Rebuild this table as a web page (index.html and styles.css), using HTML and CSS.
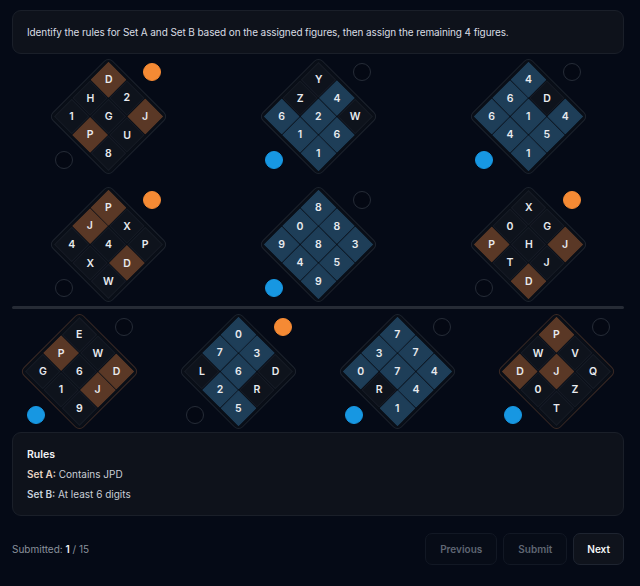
FILE: index.html
```html
<!DOCTYPE html>
<html lang="en">
<head>
<meta charset="utf-8">
<title>Set Rules</title>
<link rel="stylesheet" href="styles.css">
</head>
<body>
<div class="page">
  <div class="prompt">Identify the rules for Set A and Set B based on the assigned figures, then assign the remaining 4 figures.</div>

  <div class="grid grid-3">
    <div class="fig">
      <div class="diamond">
        <div class="cell a"><span>D</span></div><div class="cell"><span>2</span></div><div class="cell a"><span>J</span></div>
        <div class="cell"><span>H</span></div><div class="cell"><span>G</span></div><div class="cell"><span>U</span></div>
        <div class="cell"><span>1</span></div><div class="cell a"><span>P</span></div><div class="cell"><span>8</span></div>
      </div>
      <span class="dot dot-a on"></span><span class="dot dot-b"></span>
    </div>
    <div class="fig">
      <div class="diamond">
        <div class="cell"><span>Y</span></div><div class="cell b"><span>4</span></div><div class="cell"><span>W</span></div>
        <div class="cell"><span>Z</span></div><div class="cell b"><span>2</span></div><div class="cell b"><span>6</span></div>
        <div class="cell b"><span>6</span></div><div class="cell b"><span>1</span></div><div class="cell b"><span>1</span></div>
      </div>
      <span class="dot dot-a"></span><span class="dot dot-b on"></span>
    </div>
    <div class="fig">
      <div class="diamond">
        <div class="cell b"><span>4</span></div><div class="cell"><span>D</span></div><div class="cell b"><span>4</span></div>
        <div class="cell b"><span>6</span></div><div class="cell b"><span>1</span></div><div class="cell b"><span>5</span></div>
        <div class="cell b"><span>6</span></div><div class="cell b"><span>4</span></div><div class="cell b"><span>1</span></div>
      </div>
      <span class="dot dot-a"></span><span class="dot dot-b on"></span>
    </div>
    <div class="fig">
      <div class="diamond">
        <div class="cell a"><span>P</span></div><div class="cell"><span>X</span></div><div class="cell"><span>P</span></div>
        <div class="cell a"><span>J</span></div><div class="cell"><span>4</span></div><div class="cell a"><span>D</span></div>
        <div class="cell"><span>4</span></div><div class="cell"><span>X</span></div><div class="cell"><span>W</span></div>
      </div>
      <span class="dot dot-a on"></span><span class="dot dot-b"></span>
    </div>
    <div class="fig">
      <div class="diamond">
        <div class="cell b"><span>8</span></div><div class="cell b"><span>8</span></div><div class="cell b"><span>3</span></div>
        <div class="cell b"><span>0</span></div><div class="cell b"><span>8</span></div><div class="cell b"><span>5</span></div>
        <div class="cell b"><span>9</span></div><div class="cell b"><span>4</span></div><div class="cell b"><span>9</span></div>
      </div>
      <span class="dot dot-a"></span><span class="dot dot-b on"></span>
    </div>
    <div class="fig">
      <div class="diamond">
        <div class="cell"><span>X</span></div><div class="cell"><span>G</span></div><div class="cell a"><span>J</span></div>
        <div class="cell"><span>0</span></div><div class="cell"><span>H</span></div><div class="cell"><span>J</span></div>
        <div class="cell a"><span>P</span></div><div class="cell"><span>T</span></div><div class="cell a"><span>D</span></div>
      </div>
      <span class="dot dot-a on"></span><span class="dot dot-b"></span>
    </div>
  </div>

  <div class="divider"></div>

  <div class="grid grid-4">
    <div class="fig">
      <div class="diamond warm">
        <div class="cell"><span>E</span></div><div class="cell"><span>W</span></div><div class="cell a"><span>D</span></div>
        <div class="cell a"><span>P</span></div><div class="cell"><span>6</span></div><div class="cell a"><span>J</span></div>
        <div class="cell"><span>G</span></div><div class="cell"><span>1</span></div><div class="cell"><span>9</span></div>
      </div>
      <span class="dot dot-a"></span><span class="dot dot-b on"></span>
    </div>
    <div class="fig">
      <div class="diamond">
        <div class="cell b"><span>0</span></div><div class="cell b"><span>3</span></div><div class="cell"><span>D</span></div>
        <div class="cell b"><span>7</span></div><div class="cell b"><span>6</span></div><div class="cell"><span>R</span></div>
        <div class="cell"><span>L</span></div><div class="cell b"><span>2</span></div><div class="cell b"><span>5</span></div>
      </div>
      <span class="dot dot-a on"></span><span class="dot dot-b"></span>
    </div>
    <div class="fig">
      <div class="diamond">
        <div class="cell b"><span>7</span></div><div class="cell b"><span>7</span></div><div class="cell b"><span>4</span></div>
        <div class="cell b"><span>3</span></div><div class="cell b"><span>7</span></div><div class="cell b"><span>4</span></div>
        <div class="cell b"><span>0</span></div><div class="cell"><span>R</span></div><div class="cell b"><span>1</span></div>
      </div>
      <span class="dot dot-a"></span><span class="dot dot-b on"></span>
    </div>
    <div class="fig">
      <div class="diamond warm">
        <div class="cell a"><span>P</span></div><div class="cell"><span>V</span></div><div class="cell"><span>Q</span></div>
        <div class="cell"><span>W</span></div><div class="cell a"><span>J</span></div><div class="cell"><span>Z</span></div>
        <div class="cell a"><span>D</span></div><div class="cell"><span>0</span></div><div class="cell"><span>T</span></div>
      </div>
      <span class="dot dot-a"></span><span class="dot dot-b on"></span>
    </div>
  </div>

  <div class="rules">
    <div class="rules-title">Rules</div>
    <div class="rule"><span class="label-a">Set A:</span> Contains JPD</div>
    <div class="rule"><span class="label-b">Set B:</span> At least 6 digits</div>
  </div>

  <div class="footer">
    <div class="status">Submitted: <strong>1</strong> / 15</div>
    <div class="actions">
      <button class="btn btn-muted">Previous</button>
      <button class="btn btn-muted">Submit</button>
      <button class="btn btn-next">Next</button>
    </div>
  </div>
</div>
</body>
</html>
```

FILE: styles.css
```css
* { box-sizing: border-box; }

html, body {
  margin: 0;
  padding: 0;
  background: #050a16;
}

body {
  font-family: Inter, "Noto Sans", "Liberation Sans", sans-serif;
  color: #d7dbe2;
  width: 640px;
  height: 586px;
  overflow: hidden;
}

.page {
  padding: 10px 16px 0 12px;
}

.prompt {
  height: 44px;
  display: flex;
  align-items: center;
  padding: 0 14px;
  background: #0e121b;
  border: 1px solid #1a1f29;
  border-radius: 9px;
  font-size: 10px;
  color: #d9dde4;
  letter-spacing: -0.1px;
}

.grid {
  display: grid;
  justify-content: center;
  justify-items: center;
  margin-top: 2px;
}

.grid-3 {
  grid-template-columns: repeat(3, 210px);
  row-gap: 8px;
}

.grid-4 {
  grid-template-columns: repeat(4, 159px);
}

.fig {
  position: relative;
  width: 136px;
  height: 120px;
  display: flex;
  align-items: center;
  justify-content: center;
}

.diamond {
  width: 85px;
  height: 85px;
  transform: rotate(45deg);
  display: grid;
  grid-template-columns: repeat(3, 25px);
  grid-template-rows: repeat(3, 25px);
  gap: 1px;
  padding: 3px;
  background: #090e17;
  border: 1px solid #1d232d;
  border-radius: 6px;
}

.diamond.warm {
  border-color: #3a2924;
}

.cell {
  background: #0e131c;
  border: 1px solid #161b25;
  display: flex;
  align-items: center;
  justify-content: center;
}

.cell span {
  transform: rotate(-45deg);
  font-size: 10.5px;
  font-weight: 600;
  color: #e8eaee;
}

.cell.a {
  background: #5a3826;
  border-color: #5a3826;
}

.cell.b {
  background: #1e3e58;
  border-color: #1e3e58;
}

.dot {
  position: absolute;
  width: 18px;
  height: 18px;
  border-radius: 50%;
  border: 1px solid #262c37;
  background: #040813;
}

.dot-a {
  left: 103px;
  top: 7px;
}

.dot-b {
  left: 15px;
  top: 95px;
}

.dot-a.on {
  background: #f58a34;
  border-color: #f58a34;
}

.dot-b.on {
  background: #1797e2;
  border-color: #1797e2;
}

.divider {
  height: 3px;
  margin-top: 2px;
  background: #262b35;
  border-radius: 2px;
}

.rules {
  margin-top: 1px;
  padding: 13px 14px 11px;
  background: #0e121b;
  border: 1px solid #1a1f29;
  border-radius: 9px;
  font-size: 10px;
}

.rules-title {
  line-height: 18px;
  font-size: 10.5px;
  font-weight: 600;
  color: #f1f3f6;
}

.rule {
  line-height: 20px;
  color: #c9ced6;
}

.label-a {
  font-weight: 600;
  color: #e6d2c2;
}

.label-b {
  font-weight: 600;
  color: #c6d0dc;
}

.footer {
  margin-top: 17px;
  display: flex;
  align-items: center;
  justify-content: space-between;
}

.status {
  font-size: 10px;
  color: #8a919c;
}

.status strong {
  color: #f1f3f6;
  font-weight: 600;
}

.actions {
  display: flex;
  gap: 6px;
}

.btn {
  height: 32px;
  padding: 0 14px;
  border-radius: 7px;
  font-family: inherit;
  font-size: 10px;
  font-weight: 600;
  cursor: pointer;
}

.btn-muted {
  background: #070c17;
  border: 1px solid #121824;
  color: #5f6673;
}

.btn-next {
  background: #0f131c;
  border: 1px solid #1e2430;
  color: #f4f5f7;
  padding: 0 13px;
}
```
